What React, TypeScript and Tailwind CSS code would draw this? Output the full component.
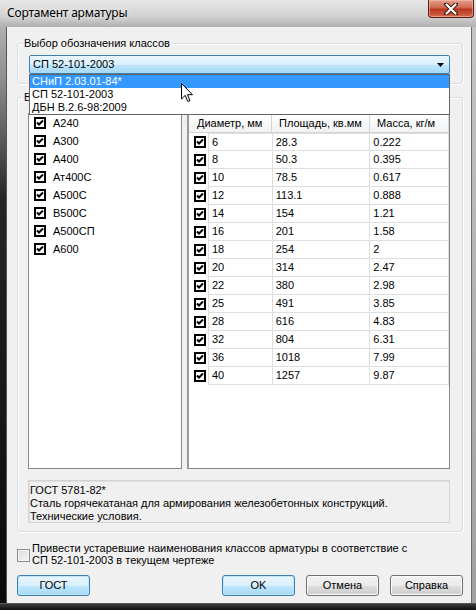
import React from "react";

const classes = ["А240", "А300", "А400", "Ат400С", "А500С", "В500С", "А500СП", "А600"];
const rows: [string, string, string][] = [
  ["6", "28.3", "0.222"],
  ["8", "50.3", "0.395"],
  ["10", "78.5", "0.617"],
  ["12", "113.1", "0.888"],
  ["14", "154", "1.21"],
  ["16", "201", "1.58"],
  ["18", "254", "2"],
  ["20", "314", "2.47"],
  ["22", "380", "2.98"],
  ["25", "491", "3.85"],
  ["28", "616", "4.83"],
  ["32", "804", "6.31"],
  ["36", "1018", "7.99"],
  ["40", "1257", "9.87"],
];

function BlackCheck() {
  return (
    <svg width="12" height="12" viewBox="0 0 12 12" className="shrink-0">
      <rect x="1" y="1" width="10" height="10" fill="white" stroke="black" strokeWidth="2" />
      <path d="M3 5.5 L5 7.5 L9 3.5" stroke="black" strokeWidth="2" fill="none" />
    </svg>
  );
}

function Group({
  label,
  className,
  contentClassName,
  children,
}: {
  label: string;
  className?: string;
  contentClassName?: string;
  children: React.ReactNode;
}) {
  return (
    <div className={"border border-[#d5dfe5] rounded-[3px] shadow-[inset_1px_1px_0_#ffffff,1px_1px_0_#ffffff] " + (className ?? "")}>
      <div className="-mt-[7px] ml-[5px] px-[1px] w-fit bg-[#f0f0f0] leading-[13px]">{label}</div>
      <div className={contentClassName}>{children}</div>
    </div>
  );
}

function Button({ label, focused }: { label: string; focused?: boolean }) {
  return (
    <div
      className={
        "w-[73px] h-[21px] rounded-[3px] border flex items-center justify-center leading-[13px] " +
        (focused
          ? "border-[#3c7fb1] bg-[linear-gradient(to_bottom,#eaf6fd_0%,#d9f0fc_50%,#bee6fd_51%,#a7d9f5_100%)] shadow-[inset_0_0_0_1px_#bfe6fb]"
          : "border-[#707070] bg-[linear-gradient(to_bottom,#f2f2f2_0%,#ebebeb_50%,#dddddd_51%,#cfcfcf_100%)] shadow-[inset_0_0_0_1px_#fcfcfc]")
      }
    >
      {label}
    </div>
  );
}

export default function App() {
  return (
    <div className="relative w-[476px] h-[610px] flex flex-col overflow-hidden bg-[#1c1c1c] font-['Liberation_Sans',Arial,sans-serif] text-[11px] text-black select-none">
      {/* Title bar */}
      <div className="h-[27px] shrink-0 flex items-start bg-[linear-gradient(to_bottom,#e6e6e6,#d2d2d2_60%,#b0b0b0)]">
        <div className="pl-[7px] pt-[5px] text-[12px] leading-[16px] font-['Noto_Sans',sans-serif] tracking-[-0.2px] [text-shadow:0_0_6px_#ffffff]">
          Сортамент арматуры
        </div>
        <div className="ml-auto mr-[2px] w-[46px] h-[18px] rounded-b-[4px] border border-t-0 border-[#5a1d14] bg-[linear-gradient(to_bottom,#e2a08e_0%,#d0674f_45%,#b8361f_55%,#d46a4d_100%)] flex items-center justify-center shadow-[inset_0_0_0_1px_rgba(255,200,180,0.5)]">
          <svg width="14" height="12" viewBox="0 0 14 12">
            <path d="M2 1 L12 11 M12 1 L2 11" stroke="#3a1410" strokeWidth="4" strokeLinecap="round" />
            <path d="M2.5 1.5 L11.5 10.5 M11.5 1.5 L2.5 10.5" stroke="#ffffff" strokeWidth="2.2" strokeLinecap="round" />
          </svg>
        </div>
      </div>

      <div className="flex flex-1 min-h-0">
        {/* Left frame */}
        <div className="w-[7px] shrink-0 bg-[linear-gradient(to_bottom,#b0b0b0,#8a8a8a_10%,#252525_30%,#0a0a0a)] border-r border-[#555]" />
        {/* Client */}
        <div className="flex-1 bg-[#f0f0f0] flex flex-col pl-[10px] pr-[8px] pt-[16px] pb-[7px]">
          <Group label="Выбор обозначения классов" contentClassName="pl-[11px] pr-[12px] pb-[9px]">
            <div className="mt-[5px] h-[19px] rounded-[2px] border border-[#3c7fb1] bg-[linear-gradient(to_bottom,#eaf6fd_0%,#d9f0fc_50%,#bee6fd_51%,#a7d9f5_100%)] flex items-center pl-[3px] pr-[5px] leading-[13px]">
              <span>СП 52-101-2003</span>
              <svg className="ml-auto" width="7" height="4" viewBox="0 0 7 4">
                <path d="M0 0 H7 L3.5 4 Z" fill="#000" />
              </svg>
            </div>
          </Group>

          <Group label="Выбор классов и диаметров" className="mt-[13px]" contentClassName="pl-[10px] pr-[12px] pb-[8px]">
            <div className="mt-[9px] h-[356px] flex gap-[5px]">
              {/* Classes list */}
              <div className="w-[154px] border border-[#828790] bg-white flex flex-col">
                {classes.map((c) => (
                  <div key={c} className="h-[18px] flex items-center pl-[5px] gap-[7px] leading-[13px]">
                    <BlackCheck />
                    <span>{c}</span>
                  </div>
                ))}
              </div>
              {/* Diameters table */}
              <div className="flex-1 border border-[#828790] border-l-2 border-l-[#9a9a9a] bg-white flex flex-col">
                <div className="h-[19px] flex border-b border-[#d5d5d5] bg-[linear-gradient(to_bottom,#ffffff,#f1f2f4)] leading-[13px]">
                  <div className="w-[83px] border-r border-[#d5d5d5] flex items-center pl-[8px]">Диаметр, мм</div>
                  <div className="w-[98px] border-r border-[#d5d5d5] flex items-center pl-[7px]">Площадь, кв.мм</div>
                  <div className="w-[79px] border-r border-[#d5d5d5] flex items-center pl-[7px]">Масса, кг/м</div>
                </div>
                <div className="flex flex-col">
                  {rows.map(([d, a, m], i) => (
                    <div key={d} className="h-[18px] flex leading-[13px]">
                      <div className="w-[19px] flex items-center pl-[5px]">
                        <BlackCheck />
                      </div>
                      <div className={"w-[241px] flex border-b border-l border-[#dedede] " + (i === 0 ? "border-t" : "")}>
                        <div className="w-[64px] flex items-center pl-[3px] border-r border-[#dedede]">{d}</div>
                        <div className="w-[98px] flex items-center pl-[3px] border-r border-[#dedede]">{a}</div>
                        <div className="w-[79px] flex items-center pl-[3px] border-r border-[#dedede]">{m}</div>
                      </div>
                    </div>
                  ))}
                </div>
              </div>
            </div>
            <div className="mt-[11px] h-[43px] border border-[#d3d3d3] bg-[#f0f0f0] shadow-[inset_1px_1px_0_#e0e0e0] pl-[1px] pt-[3px] leading-[13px]">
              <div>ГОСТ 5781-82*</div>
              <div>Сталь горячекатаная для армирования железобетонных конструкций.</div>
              <div>Технические условия.</div>
            </div>
          </Group>

          <div className="mt-[10px] flex items-start">
            <div className="mt-[7px] w-[13px] h-[13px] shrink-0 border border-[#8f8f8f] bg-[linear-gradient(135deg,#dcdcdc,#f6f6f6)] shadow-[inset_0_0_0_1px_#f4f4f4]" />
            <div className="ml-[2px] leading-[12px]">
              <div>Привести устаревшие наименования классов арматуры в соответствие с</div>
              <div>СП 52-101-2003 в текущем чертеже</div>
            </div>
          </div>

          <div className="mt-[9px] flex">
            <Button label="ГОСТ" focused />
            <div className="ml-auto flex gap-[11px]">
              <Button label="OK" focused />
              <Button label="Отмена" />
              <Button label="Справка" />
            </div>
          </div>
        </div>
        {/* Right frame */}
        <div className="w-[5px] shrink-0 bg-[linear-gradient(to_bottom,#c4c4c4,#a0a0a0)] border-l border-[#707070]" />
      </div>
      <div className="h-[7px] shrink-0 bg-[linear-gradient(to_bottom,#3a3a3a,#0e0e0e)] border-t border-[#555]" />

      {/* Open dropdown list (overlay) */}
      <div className="absolute left-[29px] top-[74px] w-[421px] border border-[#646464] bg-white leading-[13px] flex flex-col">
        <div className="h-[13px] bg-[#3399ff] text-white pl-[2px] flex items-center">СНиП 2.03.01-84*</div>
        <div className="h-[13px] pl-[2px] flex items-center">СП 52-101-2003</div>
        <div className="h-[13px] pl-[2px] flex items-center">ДБН В.2.6-98:2009</div>
      </div>

      {/* Mouse cursor (overlay) */}
      <svg className="absolute left-[181px] top-[83px]" width="13" height="20" viewBox="0 0 13 20">
        <path d="M0.5 0.5 L0.5 16 L4.2 12.4 L6.8 18.5 L9 17.6 L6.5 11.7 L11.5 11.7 Z" fill="#ffffff" stroke="#000000" strokeWidth="1" strokeLinejoin="miter" />
      </svg>
    </div>
  );
}
